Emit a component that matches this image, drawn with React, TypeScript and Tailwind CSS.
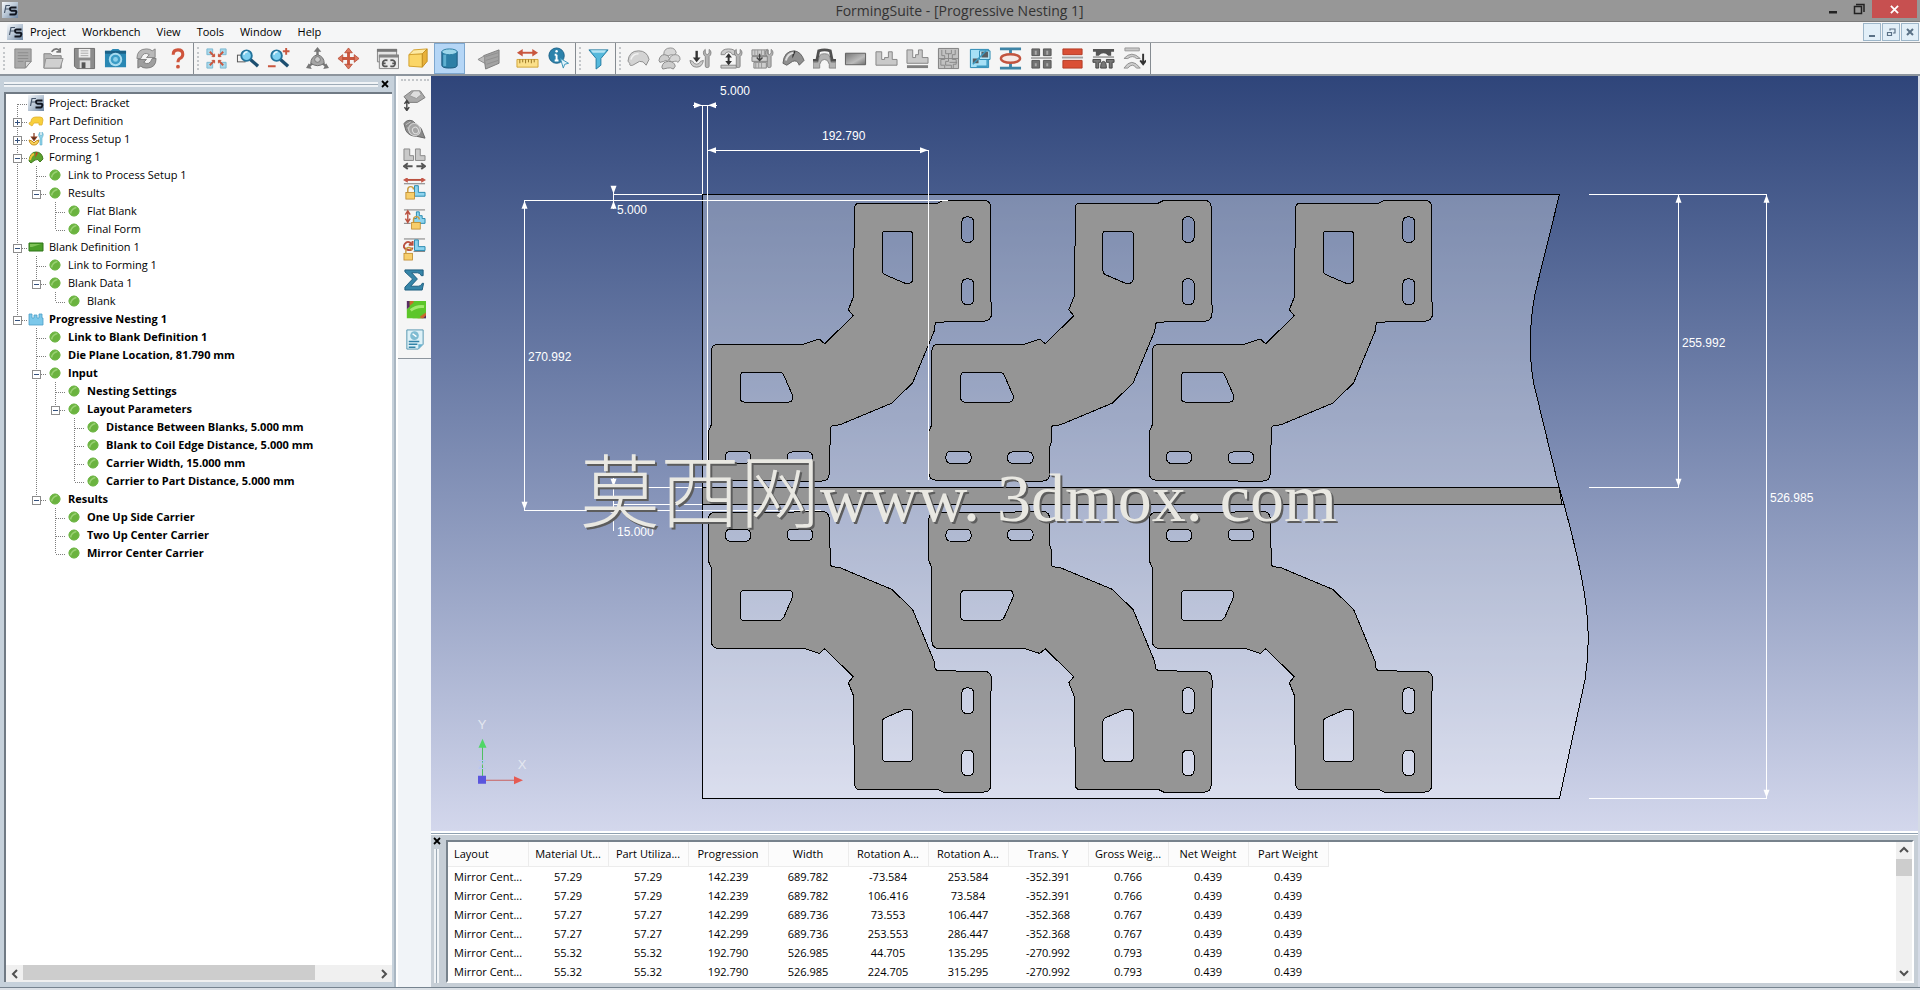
import { Fragment, ReactNode } from "react";

type IconProps = { children: ReactNode };

function Icon({ children }: IconProps) {
  return (
    <svg viewBox="0 0 24 24" className="size-[23px] shrink-0" fill="none" aria-hidden="true">
      {children}
    </svg>
  );
}

const FsLogo = () => (
  <svg viewBox="0 0 16 16" className="size-4 shrink-0" aria-hidden="true">
    <defs>
      <linearGradient id="fs" x1="0" y1="0" x2="1" y2="1">
        <stop offset="0" stopColor="#f4f7fa" />
        <stop offset="0.5" stopColor="#b9c7d6" />
        <stop offset="1" stopColor="#6f87a3" />
      </linearGradient>
    </defs>
    <rect width="16" height="16" fill="url(#fs)" />
    <path d="M2.500 11L4 3.500h4M3.500 7h3.500" fill="none" stroke="#46566b" strokeWidth="1.200" />
    <path d="M14.500 5.500H9.500Q8 5.500 8 7t1.500 1.700H13q1.500 0 1.300 1.800T12.500 12.500H7.500" fill="none" stroke="#10151f" strokeWidth="2" />
  </svg>
);

const wrench = (
  <path d="M17 2.500v4l2 1.500 2-1.500v-4q2 1 2 3.500t-2 4v10q0 1.500-2 1.500t-2-1.500V10q-2-1.500-2-4t2-3.500z" fill="#b4b4b4" stroke="#777" strokeWidth="0.800" />
);
const ell = (x: number, y: number) => (
  <path d={`M${x} ${y}h4v7h7v4h-11z`} fill="#8ed4ef" stroke="#2789b0" />
);
const lock = (x: number, y: number) => (
  <>
    <path d={`M${x + 2} ${y}v-3q0-3 3-3t3 3`} stroke="#c99a3c" strokeWidth="1.500" />
    <rect x={x} y={y} width="9" height="7" fill="#f7ce6b" stroke="#bb8526" strokeWidth="0.800" />
  </>
);

const fileTools: [string, ReactNode][] = [
  ["New", <><path d="M4 2h17v13l-6 7H4z" fill="#a9a9a9" stroke="#8a8a8a" /><path d="M15 22v-7h6z" fill="#d8d8d8" stroke="#8a8a8a" /><path d="M7 6h11M7 9h11M7 12h11M7 15h6" stroke="#8c8c8c" /></>],
  ["Open", <><path d="M2 7h7l2 2h9v13H2z" fill="#b5b5b5" stroke="#858585" /><path d="M4 12h18l-3 10H2z" fill="#d0d0d0" stroke="#909090" /><path d="M10 5q5-6 9 0m0-4v4h-4" stroke="#777" strokeWidth="1.800" /></>],
  ["Save", <><path d="M1.500 1.500h21v21H4l-2.500-2.500z" fill="#8c8c8c" stroke="#6d6d6d" /><path d="M6 2h12v9H6z" fill="#eee" /><path d="M8 4h8M8 6.500h8M8 9h8" stroke="#aaa" /><path d="M7 14h11v8H7z" fill="#ddd" /><path d="M9 16h4v6H9z" fill="#555" /></>],
  ["Snapshot", <><path d="M1 4h6l2-2h6l2 2h6v17H1z" fill="#2a88b4" /><path d="M1 4h22v3H1z" fill="#1b6187" /><circle cx="12" cy="13" r="7" fill="#a7dcf0" /><circle cx="12" cy="13" r="5" fill="#3b9cc6" /><circle cx="12" cy="13" r="2.500" fill="#8bd0ea" /></>],
  ["Refresh", <><path d="M2 12Q2 2 12 2q4 0 6 2l3-2v9h-9l3-3q-6-4-9 4z" fill="#b9b9b9" stroke="#858585" /><path d="M22 12q0 10-10 10-4 0-6-2l-3 2v-9h9l-3 3q6 4 9-4z" fill="#9f9f9f" stroke="#7c7c7c" /></>],
  ["Help", <><path d="M7.500 8q0-5 5-5t5 4.500q0 3-3 4.500-2 1-2 4" stroke="#cf553c" strokeWidth="3.200" /><circle cx="12.500" cy="20.500" r="2" fill="#cf553c" /></>],
];

const lens = (x: number) => (
  <>
    <path d={`M${x + 4} 13l8 7`} stroke="#1d4f70" strokeWidth="3.500" />
    <circle cx={x} cy="9" r="5.500" fill="#7fd0f0" stroke="#23749c" strokeWidth="2" />
    <path d={`M${x - 3} 8q1-3 4-3`} stroke="#e8f8ff" strokeWidth="1.500" />
  </>
);

const viewTools: [string, ReactNode][] = [
  ["Fit view", <><path d="M2 2h6v6H2zM16 2h6v6h-6zM2 16h6v6H2zM16 16h6v6h-6z" fill="#a9d8ea" stroke="#7ab8d2" /><path d="M5 5l5 5M19 5l-5 5M5 19l5-5M19 19l-5-5" stroke="#c9573f" strokeWidth="2" /><path d="M10 7v3H7M14 7v3h3M10 17v-3H7M14 17v-3h3" stroke="#c9573f" /></>],
  ["Zoom window", <><rect x="1.500" y="8.500" width="8" height="7" stroke="#555" />{lens(11)}</>],
  ["Zoom in or out", <>{lens(10)}<path d="M20 1v7M16.500 4.500h7M1 20h8" stroke="#c9573f" strokeWidth="2" /></>],
];
const moveTools: [string, ReactNode][] = [
  ["Rotate view", <><path d="M12 3v10M12 13l-9 7M12 13l9 7" stroke="#777" strokeWidth="2.500" /><path d="M12 0l-4 5h8zM0 22l6 1-3-6zM24 22l-6 1 3-6z" fill="#777" /><path d="M5 17q0-7 7-9 7 2 7 9-7 5-14 0z" fill="#a5a5a5" stroke="#6c6c6c" /><circle cx="12" cy="13" r="3" fill="#ccc" stroke="#777" /></>],
  ["Pan", <><path d="M12 4v16M4 12h16" stroke="#c9573f" strokeWidth="3" /><path d="M12 1l-4 5h8zM12 23l-4-5h8zM1 12l5-4v8zM23 12l-5-4v8z" fill="#dd765d" stroke="#b3452e" strokeWidth="0.800" /></>],
];
const displayTools: [string, ReactNode][] = [
  ["Reset window", <><path d="M1.500 2.500h20v13h-20z" fill="#e4e4e4" stroke="#858585" /><path d="M1 2h21v3H1z" fill="#777" /><path d="M3.500 8.500h20v14h-20z" fill="#e9e9e9" stroke="#858585" /><path d="M3 8h21v3H3z" fill="#858585" /><path d="M12 14q-5-1-5 3h3m5-3q5-1 5 3m-5 3q5 1 5-3h-3m-5 3q-5 1-5-2" stroke="#555" strokeWidth="1.800" /></>],
  ["Perspective", <><path d="M2 8l14-1v14L2 20z" fill="#fbd667" stroke="#d3a02c" /><path d="M2 8l5-5 14-1-5 5z" fill="#fdeaa4" stroke="#d3a02c" /><path d="M16 7l5-5v13l-5 6z" fill="#e8b13a" stroke="#c28f22" /></>],
];
const shade: [string, ReactNode] = [
  "Shaded view",
  <><path d="M4 5v14q0 3 8 3t8-3V5z" fill="#2d7fa6" stroke="#1c5a7d" /><ellipse cx="12" cy="5" rx="8" ry="3" fill="#9dd6ea" stroke="#2c7ea4" /><path d="M7 8v12" stroke="#5fb0d0" strokeWidth="3" /></>,
];
const mirror: [string, ReactNode] = ["Section view", <><path d="M7 9L23 3v14L9 23z" fill="#a3a3a3" stroke="#7c7c7c" /><path d="M1 13l7-4v8z" fill="#bdbdbd" stroke="#8c8c8c" /><path d="M9 10l13-4M9 14l13-4M10 18l12-4" stroke="#8f8f8f" /></>];
const measureTools: [string, ReactNode][] = [
  ["Measure", <><path d="M5 6h14" stroke="#c9573f" strokeWidth="2" /><path d="M1 6l6-4v8zM23 6l-6-4v8z" fill="#c9573f" /><path d="M1 13h22v8H1z" fill="#fbe08a" stroke="#d1a336" /><path d="M4 13v4M7 13v3M10 13v4M13 13v3M16 13v4M19 13v3" stroke="#967221" /></>],
  ["Information", <><circle cx="10" cy="9" r="8" fill="#2c82ab" stroke="#1c6288" /><path d="M10 8v6M8 14h4M8 8h2" stroke="#fff" strokeWidth="2" /><circle cx="10" cy="4.500" r="1.300" fill="#fff" /><path d="M14 12l3 10 1.500-4 4-1z" fill="#dff3fb" stroke="#3893b8" /></>],
];
const filterTool: [string, ReactNode] = ["Filter", <><path d="M2 3h20l-7.500 9v7l-5 4V12z" fill="#55b9dc" stroke="#207ba2" /><path d="M4 3.500h16l-2 2.500H6z" fill="#b4e3f3" /></>];

const processTools: [string, ReactNode][] = [
  ["Part", <><path d="M1 15Q2 4 12 4q9 0 11 9l-3 6q-3-5-7-4l-7 4q-4 1-3-2z" fill="#d3d3d3" stroke="#8c8c8c" /><path d="M4 13q2-6 8-6" stroke="#f2f2f2" strokeWidth="1.500" /></>],
  ["Parts", <><path d="M6 8q0-7 7-7 5 0 6 5l-2 3q-3-2-6 0l-4 1z" fill="#d6d6d6" stroke="#909090" /><path d="M1 14q1-6 6-6 4 0 5 4l-2 3q-2-2-4 0l-4 1z" fill="#cecece" stroke="#8a8a8a" /><path d="M12 13q1-5 6-5t5 5l-2 3q-2-2-4-1l-4 1z" fill="#d6d6d6" stroke="#909090" /><path d="M4 21q1-6 7-6 6 0 7 5l-2 3q-3-2-6-1l-5 1z" fill="#ccc" stroke="#888" /></>],
  ["Process setup", <><path d="M8 4v9" stroke="#333" strokeWidth="2.500" /><path d="M4 11h8l-4 5z" fill="#333" /><path d="M1 14q1 7 7 7t7-7l-3 1q-1 3-4 3t-4-3z" fill="#ccc" stroke="#888" />{wrench}</>],
  ["Die setup", <><path d="M1 8q0-6 8-6t8 6h-4q-1-3-4-3T5 8zM1 19h16v3H1z" fill="#ccc" stroke="#888" /><path d="M9 8v9" stroke="#333" strokeWidth="2" /><path d="M5.500 11L9 6.500l3.500 4.500zM5.500 14.500L9 19l3.500-4.500z" fill="#333" />{wrench}</>],
  ["Press setup", <><path d="M1 3h17v6H1zM1 10h17v5H1zM3 16h13v6H3z" fill="#cdcdcd" stroke="#858585" /><path d="M4 3v6M7 3v6M11 3v6M14 3v6M5 16v6M8 16v6M11 16v6" stroke="#999" /><path d="M9 7v7m-3-3l3 3 3-3" stroke="#444" strokeWidth="1.500" />{wrench}</>],
  ["Forming", <><path d="M1 17Q2 4 13 4q7 1 10 10l-5 5q-2-6-7-4l-6 4z" fill="#8f8f8f" stroke="#636363" /><path d="M13 4q-3 4-2 8l3-7z" fill="#333" /><path d="M4 14q2-7 8-8" stroke="#ddd" strokeWidth="2" /></>],
  ["Springback", <><path d="M0 16h5l2-7q1-2 5-2t5 2l2 7h5v6h-7v-4l-2-4q-3-2-6 0l-2 4v4H0z" fill="#b2b2b2" stroke="#868686" /><path d="M0 14h4L6 4q6-2 12 0l2 10h4" stroke="#505050" strokeWidth="3" /></>],
  ["Blank", <><defs><linearGradient id="bk" x1="0" y1="0" x2="1" y2="1"><stop stopColor="#777" /><stop offset="0.600" stopColor="#bbb" /><stop offset="1" stopColor="#707070" /></linearGradient></defs><path d="M1.500 6.500h21v12h-21z" fill="url(#bk)" stroke="#5d5d5d" /></>],
  ["Nesting", <path d="M1 5h6v8h3v-2h4V5h4v8h5v6H1z" fill="#c9c9c9" stroke="#858585" />],
  ["Progressive nesting", <><path d="M1 3h6v8h3V8h3V3h4v8h6v6H1z" fill="#c9c9c9" stroke="#858585" /><path d="M1 19h22v3H1z" fill="#808080" /></>],
  ["Grid nesting", <><path d="M1.500 1.500h21v21h-21z" fill="#c1c1c1" stroke="#808080" /><path d="M5 3v6h3v4H4v6h4v3M9 3v4h6V3M12 7v8H9v4h6v3M19 3v5h-3v5h4v5h-3v4M2 12h20M13 16h8" stroke="#888" /></>],
  ["Compare", <><path d="M2.500 2.500h19v19h-19z" fill="#a6e0f6" stroke="#2787b2" /><path d="M12 4h11v9H12z" fill="#bceafa" stroke="#2787b2" /><path d="M14 5h7v6h-7zM5 12h6v5H5z" fill="#575f64" /><path d="M5 18L19 4M9 20h11v-7" stroke="#3b9ac1" strokeWidth="1.500" /></>],
  ["Stage", <><path d="M1 2h22M1 22h22M12 2v5M12 17v5" stroke="#3e84a6" strokeWidth="3" /><ellipse cx="12" cy="12" rx="10" ry="4.500" fill="#f6e9e6" stroke="#c2543f" strokeWidth="2.500" /></>],
  ["Four up", <><path d="M2 2h8v7H2zM14 2h8v7h-8zM2 14h8v8H2zM14 14h8v8h-8z" fill="#727272" stroke="#555" /><path d="M6 4v4M18 4v4M6 17v3M18 17v3" stroke="#a9a9a9" strokeWidth="2" /><path d="M1 11.500h22" stroke="#aaa" strokeWidth="2" /></>],
  ["Two up", <><path d="M2 2h20v6H2zM2 14h20v8H2z" fill="#da4f35" stroke="#b43b25" /><path d="M1 11h22" stroke="#a2a2a2" strokeWidth="2" /></>],
  ["Die construction", <><path d="M1 2h22v3h-3v4H17q-5-5-10 0H4V5H1z" fill="#555" /><path d="M1 10.500h22" stroke="#aaa" strokeWidth="2" /><path d="M1 13h8v3H7v6H4v-6H1zM15 13h8v3h-2v6h-3v-6h-3zM9 22q0-7 3-7t3 7z" fill="#777" stroke="#444" /></>],
  ["Stamping", <><path d="M2 1h15v3H2z" fill="#c9c9c9" stroke="#999" /><path d="M1 12q8-9 17 0h-4q-4-4-9 0zM1 22q8-12 17 0h-4q-4-6-9 0z" fill="#ccc" stroke="#919191" /><path d="M21 7v10m-3-3l3 4 3-4" stroke="#333" strokeWidth="2" /></>],
];

const sideTools: [string, ReactNode][] = [
  ["Blank height", <><path d="M1 9l8-6h9l5 7-8 5H6z" fill="#aaa" stroke="#7c7c7c" /><path d="M7 8l4-5h6l2 4-5 4z" fill="#ddd" stroke="#999" /><path d="M4 14v8M1.500 16.500L4 13l2.500 3.500M1.500 20L4 23.500 6.500 20" stroke="#444" strokeWidth="1.500" /></>],
  ["Coil", <><path d="M1 6q3-5 9-3l9 8 4 10-9-2q-8 0-11-6z" fill="#8b8b8b" stroke="#676767" /><ellipse cx="12" cy="12" rx="6" ry="6.500" fill="#a6a6a6" stroke="#ddd" transform="rotate(-30 12 12)" /><ellipse cx="13" cy="13" rx="3" ry="3.500" stroke="#ddd" transform="rotate(-30 13 13)" /><path d="M3 7l5-3M4 11l7-6" stroke="#c4c4c4" /></>],
  ["Spacing", <><path d="M1 1h6v7h4v5H1zM13 1h5v7h5v5H13z" fill="#c9c9c9" stroke="#888" /><path d="M3 19h7M14 19h7M5 16l-4 3 4 3M19 16l4 3-4 3" stroke="#555" strokeWidth="2" /></>],
  ["Lock width", <><path d="M3 2h18" stroke="#b9503f" strokeWidth="2" /><path d="M5-1L0 2l5 3zM19-1l5 3-5 3z" fill="#c4584a" /><path d="M1 6h22" stroke="#777" />{ell(12, 8)}{lock(3, 15)}</>],
  ["Lock height", <><path d="M1 2h22M1 16h7" stroke="#777" /><path d="M5 4v10M2.500 7L5 3l2.500 4M2.500 11L5 15l2.500-4" stroke="#b9503f" strokeWidth="1.500" /><path d="M14 4h3v4h3v3h3v5h-12v-5h3z" fill="#8ed4ef" stroke="#2789b0" />{lock(9, 15)}</>],
  ["Lock rotation", <><path d="M1 1h22M11 14h12" stroke="#777" /><path d="M9 6q-4-4-7 0t2 6 6-2M10 3v4H6" stroke="#b9503f" strokeWidth="2" />{ell(12, 2)}{lock(1, 16)}</>],
  ["Summary", <path d="M2 2h19v6h-2q-1-3-4-3H9l6 6.500L8 19h8q3 0 4-3h1.500L20 23H2v-3l8-8.500L2 4z" fill="#3685a8" stroke="#1c5d7e" />],
  ["Contour", <><path d="M4 3h20v18H10z" fill="#5cc62a" /><path d="M4 3h3v6l-3 3zM19 21h5v-4z" fill="#5a2d63" /><path d="M7 3v5l4-3V3zM15 21l9-6v3l-3 3z" fill="#c96a2d" /><path d="M4 12v9h15L8 8z" fill="#5cc62a" /><path d="M8 13q6-5 14-4" stroke="#a1e86f" strokeWidth="3" /></>],
  ["Report", <><path d="M4 2h17v15l-5 5H4z" fill="#def1f7" stroke="#5595b0" /><circle cx="12" cy="8" r="4.500" fill="#7fbcd2" /><path d="M10 6l4 3" stroke="#fff" strokeWidth="1.500" /><path d="M6 14h11M6 17h9M6 20h7" stroke="#3283a7" strokeWidth="1.500" /><path d="M16 22v-5h5z" fill="#69b2cf" /></>],
];

function ToolButton({ tool, active }: { tool: [string, ReactNode]; active?: boolean }) {
  return (
    <button
      aria-label={tool[0]}
      className={`flex h-[31px] w-[31px] shrink-0 items-center justify-center ${
        active ? "border border-[#7da7cf] bg-[#b5d6f6]" : ""
      }`}
    >
      <Icon>{tool[1]}</Icon>
    </button>
  );
}

const Buttons = ({ tools }: { tools: [string, ReactNode][] }) => (
  <div className="flex">
    {tools.map((t) => (
      <ToolButton key={t[0]} tool={t} />
    ))}
  </div>
);

const Grip = () => (
  <div className="flex w-[7px] shrink-0 justify-center py-1">
    <div className="border-l-2 border-dotted border-[#c4c7ca]" />
  </div>
);

const Divider = () => <div className="w-px shrink-0 bg-[#858b91]" />;

type Node = { text: string; icon?: string; bold?: boolean; children?: Node[]; closed?: boolean };

const tree: Node[] = [
  { text: "Project: Bracket", icon: "fs" },
  { text: "Part Definition", icon: "part", closed: true },
  { text: "Process Setup 1", icon: "setup", closed: true },
  {
    text: "Forming 1",
    icon: "forming",
    children: [
      { text: "Link to Process Setup 1" },
      { text: "Results", children: [{ text: "Flat Blank" }, { text: "Final Form" }] },
    ],
  },
  {
    text: "Blank Definition 1",
    icon: "blank",
    children: [
      { text: "Link to Forming 1" },
      { text: "Blank Data 1", children: [{ text: "Blank" }] },
    ],
  },
  {
    text: "Progressive Nesting 1",
    icon: "nesting",
    bold: true,
    children: [
      { text: "Link to Blank Definition 1" },
      { text: "Die Plane Location, 81.790 mm" },
      {
        text: "Input",
        children: [
          { text: "Nesting Settings" },
          {
            text: "Layout Parameters",
            children: [
              { text: "Distance Between Blanks, 5.000 mm" },
              { text: "Blank to Coil Edge Distance, 5.000 mm" },
              { text: "Carrier Width, 15.000 mm" },
              { text: "Carrier to Part Distance, 5.000 mm" },
            ],
          },
        ],
      },
      {
        text: "Results",
        children: [
          { text: "One Up Side Carrier" },
          { text: "Two Up Center Carrier" },
          { text: "Mirror Center Carrier" },
        ],
      },
    ],
  },
];

function NodeIcon({ name }: { name?: string }) {
  if (name === "fs") return <FsLogo />;
  return (
    <svg viewBox="0 0 16 16" className="size-4 shrink-0" fill="none" aria-hidden="true">
      {!name && (
        <>
          <circle cx="8" cy="8" r="5.300" fill="#6bb33f" />
          <path d="M4.500 10.500q1-5 6-6" stroke="#98d072" strokeWidth="1.600" />
          <circle cx="8" cy="8" r="5" stroke="#74b94d" />
        </>
      )}
      {name === "part" && <path d="M1 11q0-2 2-2 0-5 5-5h4q3 0 3 3l-1 5h-3v-2H6l-2 3z" fill="#f8cf3c" stroke="#dfb02c" strokeWidth="0.800" />}
      {name === "setup" && (
        <>
          <path d="M1 9q1 5 5 5t5-5l-3 1-2 2-2-2z" fill="#fbd45c" stroke="#c78f1e" />
          <path d="M6 2v5M3.500 6L6 9.500 8.500 6z" fill="#333" stroke="#8a3a1c" strokeWidth="1.200" />
          <path d="M12 1v3l1 1 1-1V1q2 2 1 4l-1 2v7h-2V7q-3-3 0-6z" fill="#8fd3ea" stroke="#63aecb" strokeWidth="0.600" />
        </>
      )}
      {name === "forming" && (
        <>
          <path d="M1 12Q2 3 8 3q6 0 7 7l-3 3q-2-4-5-2l-4 3z" fill="#5ca32e" stroke="#41791f" />
          <path d="M8 3l-1 6 3-5z" fill="#c83d20" />
          <path d="M2 11q1-5 4-6" stroke="#f0c23a" strokeWidth="2" />
        </>
      )}
      {name === "blank" && (
        <>
          <path d="M1 4h14v8H1z" fill="#4b9e2a" stroke="#2f7418" />
          <path d="M2 5h11l-9 3H2z" fill="#7fc258" />
        </>
      )}
      {name === "nesting" && <path d="M1 3h3v4h2V4h3v3h2V3h3v4h1v7H1z" fill="#7cc8ea" stroke="#4ba0c8" strokeWidth="0.800" />}
    </svg>
  );
}

// One 19px cell of the guide lines left of a tree label.
function Guide({ kind, first }: { kind: string; first?: boolean }) {
  const box = kind.includes("box");
  return (
    <svg viewBox="0 0 19 18" className="h-[18px] w-[19px] shrink-0" fill="none" shapeRendering="crispEdges" aria-hidden="true">
      <g stroke="#7d7d7d" strokeDasharray="1 1">
        {!first && kind !== "none" && <path d="M9.500 0V10" />}
        {(kind === "line" || kind.includes("more")) && <path d="M9.500 10V18" />}
        {kind !== "line" && kind !== "none" && <path d="M10 10.500H19" />}
      </g>
      {box && (
        <>
          <rect x="5.500" y="6.500" width="8" height="8" fill="#fff" stroke="#8c8c8c" />
          <path d="M7 10.500h5" stroke="#33507c" />
          {kind.includes("plus") && <path d="M9.500 8v5" stroke="#33507c" />}
        </>
      )}
    </svg>
  );
}

function TreeRows({ nodes, lines = [], bold }: { nodes: Node[]; lines?: boolean[]; bold?: boolean }) {
  return (
    <ul>
      {nodes.map((n, i) => {
        const last = i === nodes.length - 1;
        const strong = bold || n.bold;
        const kind = [
          n.children || n.closed ? "box" : "leaf",
          n.closed ? "plus" : "",
          last ? "" : "more",
        ].join("-");
        return (
          <li key={n.text}>
            <div className="flex h-[18px] items-center">
              {lines.map((on, d) => (
                <Guide key={d} kind={on ? "line" : "none"} />
              ))}
              <Guide kind={kind} first={i === 0 && lines.length === 0} />
              <div className="flex w-[18px] shrink-0 justify-center">
                <NodeIcon name={n.icon} />
              </div>
              <span className={`pl-1 leading-[18px] whitespace-nowrap ${strong ? "font-bold" : ""}`}>
                {n.text}
              </span>
            </div>
            {n.children && <TreeRows nodes={n.children} lines={[...lines, !last]} bold={strong} />}
          </li>
        );
      })}
    </ul>
  );
}

const columns = [
  "Layout",
  "Material Ut...",
  "Part Utiliza...",
  "Progression",
  "Width",
  "Rotation A...",
  "Rotation A...",
  "Trans. Y",
  "Gross Weig...",
  "Net Weight",
  "Part Weight",
];

const rows = [
  ["57.29", "57.29", "142.239", "689.782", "-73.584", "253.584", "-352.391", "0.766", "0.439", "0.439"],
  ["57.29", "57.29", "142.239", "689.782", "106.416", "73.584", "-352.391", "0.766", "0.439", "0.439"],
  ["57.27", "57.27", "142.299", "689.736", "73.553", "106.447", "-352.368", "0.767", "0.439", "0.439"],
  ["57.27", "57.27", "142.299", "689.736", "253.553", "286.447", "-352.368", "0.767", "0.439", "0.439"],
  ["55.32", "55.32", "192.790", "526.985", "44.705", "135.295", "-270.992", "0.793", "0.439", "0.439"],
  ["55.32", "55.32", "192.790", "526.985", "224.705", "315.295", "-270.992", "0.793", "0.439", "0.439"],
];

const bracket =
  "M859 203.300H938L943 200.700H984Q990.700 200.700 990.700 208V300L991.500 305V313Q991.500 321.300 984 321.500H962L938 322.500Q935 322.500 935 325L934.300 331L912.700 383L892 403.300L840 425L833 426Q830.700 426 830.700 429V443L829.300 447V473Q829.300 481.300 822 481.300H797L793 480.500H716Q708.300 480.500 708.300 473V432L711.300 425V352Q711.300 344.300 719 344.300H804L819.300 339.300L824.700 344L853.300 316L848.300 310L853.500 297V250L854.500 246V210Q854.500 203.300 859 203.300Z" +
  "M886 231.300H909Q912.700 231.300 912.700 235V280Q912 284.500 905 283.500L885 275Q882.300 273.500 882.300 271V235Q882.300 231.300 886 231.300Z" +
  "M961.700 223Q961.700 217 967.700 217T973.700 223V237Q973.700 242.700 967.700 242.700T961.700 237Z" +
  "M961.700 285Q961.700 279 967.700 279T973.700 285V299Q973.700 305 967.700 305T961.700 299Z" +
  "M744 372.300H779Q782 372.300 784 376L792.700 396Q793 402.300 789 402.300H744Q740.300 402.300 740.300 398V377Q740.300 372.300 744 372.300Z" +
  "M731 451.500H745Q750.700 451.500 750.700 457.500T745 463.700H731Q725.300 463.700 725.300 457.500T731 451.500Z" +
  "M793 452H807Q812.700 452 812.700 458T807 463.700H793Q787 463.700 787 458T793 452Z";

const tips: [number, number, string][] = [
  [702, 105.5, "r"],
  [708, 105.5, "l"],
  [708, 150.5, "l"],
  [928, 150.5, "r"],
  [613.5, 194, "d"],
  [613.5, 201, "u"],
  [524.5, 201, "u"],
  [524.5, 510, "d"],
  [613.5, 487, "d"],
  [613.5, 505, "u"],
  [1678.5, 195, "u"],
  [1678.5, 487, "d"],
  [1766.5, 195, "u"],
  [1766.5, 798, "d"],
];
const spin: Record<string, number> = { r: 0, d: 90, l: 180, u: 270 };

const labels: [number, number, string][] = [
  [720, 95, "5.000"],
  [822, 140, "192.790"],
  [617, 214, "5.000"],
  [528, 361, "270.992"],
  [617, 536, "15.000"],
  [1682, 347, "255.992"],
  [1770, 502, "526.985"],
];

function Viewport() {
  return (
    <svg
      viewBox="431 76 1487 755"
      preserveAspectRatio="xMidYMid slice"
      className="absolute inset-0 h-full w-full"
      fill="none"
      role="img"
      aria-label="Nesting layout"
    >
      <g shapeRendering="crispEdges">
        <path
          d="M702.500 194.500H1559.500L1535 294Q1526 343 1534 385L1557 480C1563 500 1581 565 1586 605Q1591 643 1585 680C1580 705 1570 750 1559.500 798.500H702.500Z"
          fill="#fff"
          fillOpacity="0.3"
          stroke="#000"
        />
        <path d="M702.500 487.500H1559L1562 504.500H702.500Z" fill="#959595" stroke="#000" />
        {[0, 220.5, 441].map((dx) => (
          <Fragment key={dx}>
            <path d={bracket} transform={`translate(${dx} 0)`} fill="#959595" fillRule="evenodd" stroke="#000" />
            <path d={bracket} transform={`translate(${dx} 993) scale(1 -1)`} fill="#959595" fillRule="evenodd" stroke="#000" />
          </Fragment>
        ))}
        <g stroke="#fff">
          <path d="M693 105.500H717M702.500 105V194M707.500 105V480M707.500 150.500H928.500M928.500 150V480" />
          <path d="M613 194.500H702M524 200.500H948M613.500 186V209M524.500 200V510.500H821" />
          <path d="M613.500 478V531M613 487.500H702M613 504.500H702" />
          <path d="M1589 194.500H1767M1589 487.500H1679M1589 798.500H1767M1678.500 194V487M1766.500 194V798" />
        </g>
      </g>
      {tips.map(([x, y, dir]) => (
        <path key={`${x}-${y}`} d="M0 0L-8-3V3Z" transform={`translate(${x} ${y}) rotate(${spin[dir]})`} fill="#fff" />
      ))}
      <g fill="#fff" className="font-['Liberation_Sans',sans-serif] text-[12px]">
        {labels.map(([x, y, t]) => (
          <text key={`${x}-${y}`} x={x} y={y}>
            {t}
          </text>
        ))}
      </g>
      <g className="font-['Liberation_Sans',sans-serif] text-[13px]" textAnchor="middle" fill="#e3e7f0">
        <path d="M482.500 780V746" stroke="#4fbf62" />
        <path d="M482.500 739l-4 9h8z" fill="#4fd766" />
        <path d="M482.500 780.500H515" stroke="#c9605f" />
        <path d="M523 780.500l-9-4v8z" fill="#e65a52" />
        <rect x="478" y="776" width="8" height="8" fill="#5a55dd" />
        <text x="482" y="729">Y</text>
        <text x="482" y="769" fill="#b9c6ef">Z</text>
        <text x="522" y="769">X</text>
      </g>
      <text
        x="580"
        y="521"
        fill="#e9e8e2"
        className="font-['Liberation_Serif','Noto_Sans_CJK_SC',serif] text-[68px] drop-shadow-[2px_2px_0_#5d5d5d]"
      >
        <tspan className="text-[80px] font-light">莫西网</tspan>
        www. 3dmox. com
      </text>
    </svg>
  );
}

const Chevron = ({ d }: { d: string }) => (
  <svg viewBox="0 0 10 10" className="size-[10px]" fill="none" stroke="#505050" strokeWidth="2" aria-hidden="true">
    <path d={d} />
  </svg>
);

const CloseX = () => (
  <svg viewBox="0 0 8 8" className="size-2" stroke="#000" strokeWidth="1.800" aria-hidden="true">
    <path d="M1 1l6 6M7 1L1 7" />
  </svg>
);

export default function App() {
  return (
    <div className="flex h-screen flex-col overflow-hidden bg-[#f4f5f6] font-['Open_Sans','Noto_Sans',sans-serif] text-[11px] text-black">
      <header className="flex h-[22px] shrink-0 items-start border-b border-[#7c7c7c] bg-[#979797]">
        <div className="flex flex-1 items-center pt-[2px] pl-[2px]">
          <FsLogo />
        </div>
        <h1 className="text-[14px] leading-[22px] text-[#333]">FormingSuite - [Progressive Nesting 1]</h1>
        <div className="flex flex-1 justify-end pr-[3px]">
          <button aria-label="Minimize" className="flex h-[18px] w-[26px] items-center justify-center">
            <svg viewBox="0 0 12 12" className="size-3"><path d="M2 8h8v2.500H2z" fill="#222" /></svg>
          </button>
          <button aria-label="Restore" className="flex h-[18px] w-[26px] items-center justify-center">
            <svg viewBox="0 0 12 12" className="size-3" fill="none" stroke="#222" strokeWidth="1.500"><path d="M1.500 3.500h7v7h-7zM3 1.500h8V9" /></svg>
          </button>
          <button aria-label="Close" className="flex h-[18px] w-[45px] items-center justify-center bg-[#c75050]">
            <svg viewBox="0 0 10 10" className="size-[9px]" stroke="#fff" strokeWidth="2"><path d="M1 1l8 8M9 1L1 9" /></svg>
          </button>
        </div>
      </header>

      <nav className="flex h-[21px] shrink-0 items-center border-b border-[#9b9fa3] bg-[#f5f6f7] pl-[7px]">
        <FsLogo />
        <div className="flex flex-1 gap-4 pl-[7px] leading-[20px]">
          {["Project", "Workbench", "View", "Tools", "Window", "Help"].map((m) => (
            <button key={m}>{m}</button>
          ))}
        </div>
        <div className="flex gap-px pr-px">
          {["M2 9h6", "M1.5 5.500h4v3h-4zM4 3.500V2h5v4H7", "M2 2l6 6M8 2L2 8"].map((d, i) => (
            <button
              key={d}
              aria-label={["Minimize child", "Restore child", "Close child"][i]}
              className="flex h-[18px] w-[18px] items-center justify-center border border-[#9db6c9] bg-[#e2eff8]"
            >
              <svg viewBox="0 0 10 10" className="size-[10px]" fill="none" stroke="#5a7186" strokeWidth={i === 1 ? 1.2 : 2}>
                <path d={d} />
              </svg>
            </button>
          ))}
        </div>
      </nav>

      <div role="toolbar" aria-label="Main" className="flex h-[33px] shrink-0 border-b-2 border-[#8d959d] bg-[#f5f5f5]">
        <Grip />
        <Buttons tools={fileTools} />
        <Divider />
        <Grip />
        <div className="flex gap-2 pr-px">
          <Buttons tools={viewTools} />
          <Buttons tools={moveTools} />
          <div className="flex">
            <Buttons tools={displayTools} />
            <ToolButton tool={shade} active />
          </div>
          <Buttons tools={[mirror]} />
          <Buttons tools={measureTools} />
        </div>
        <Divider />
        <Grip />
        <div className="pr-px">
          <ToolButton tool={filterTool} />
        </div>
        <Divider />
        <Grip />
        <Buttons tools={processTools} />
        <Divider />
      </div>

      <div className="flex min-h-0 flex-1">
        <aside className="flex w-[396px] shrink-0 flex-col border-r-2 border-[#a9b6c2] bg-[#c6d1db] pr-[2px] pb-[5px] pl-1">
          <div className="flex h-4 shrink-0 items-center">
            <div className="h-[5px] flex-1 border-y-2 border-[#f0f3f6] bg-[#9eabb7]" />
            <button aria-label="Close project tree" className="flex w-[14px] justify-center">
              <CloseX />
            </button>
          </div>
          <div className="flex min-h-0 flex-1 flex-col border-t-2 border-l-2 border-[#707a84] bg-white">
            <div className="min-h-0 flex-1 overflow-hidden pl-[2px]">
              <TreeRows nodes={tree} />
            </div>
            <div className="flex h-[17px] shrink-0 bg-[#f0f0f0]">
              <button aria-label="Scroll left" className="flex w-[17px] items-center justify-center">
                <Chevron d="M7 1L3 5l4 4" />
              </button>
              <div className="flex-1">
                <div className="h-[15px] w-[83%] bg-[#cdcdcd]" />
              </div>
              <button aria-label="Scroll right" className="flex w-[17px] items-center justify-center">
                <Chevron d="M3 1l4 4-4 4" />
              </button>
            </div>
          </div>
        </aside>

        <div className="flex w-[35px] shrink-0 flex-col border-l-2 border-white bg-[#f1f4f8]">
          <div role="toolbar" aria-label="Nesting" className="flex flex-col items-center border-b border-[#8d959d] bg-[#f5f5f5] pb-1">
            <div className="my-[3px] w-[28px] border-t-2 border-dotted border-[#c4c7ca]" />
            {sideTools.map((t) => (
              <button key={t[0]} aria-label={t[0]} className="flex h-[30px] w-[31px] items-center justify-center">
                <Icon>{t[1]}</Icon>
              </button>
            ))}
          </div>
        </div>

        <main className="flex min-w-0 flex-1 flex-col">
          <div className="relative min-h-0 flex-1 bg-linear-to-b from-[#2f457a] to-[#d3d7ec]">
            <Viewport />
          </div>

          <section className="flex shrink-0 flex-col border-t-2 border-white bg-[#c6ced6]">
            <div className="h-[2px] border-b border-white bg-[#8fa1b1]" />
            <div className="flex pr-1 pb-1 pl-[2px]">
              <div className="flex w-[13px] shrink-0 flex-col items-start gap-1 pt-[2px]">
                <button aria-label="Close results" className="flex">
                  <CloseX />
                </button>
                <div className="ml-px w-[5px] flex-1 border-x-2 border-[#f0f3f6] bg-[#9eabb7]" />
              </div>
              <div className="mt-[5px] flex flex-1 border-2 border-[#77828c] border-r-white border-b-white bg-white">
                <div className="flex-1">
                  <table className="table-fixed border-collapse">
                    <thead>
                      <tr className="h-[25px] bg-[#fcfcfc]">
                        {columns.map((c, i) => (
                          <th
                            key={i}
                            className={`border-r border-b border-[#ececec] p-0 font-normal whitespace-nowrap ${
                              i === 0 ? "w-[80px] pl-[6px] text-left" : "w-[80px] text-center"
                            }`}
                          >
                            {c}
                          </th>
                        ))}
                      </tr>
                    </thead>
                    <tbody>
                      {rows.map((r, i) => (
                        <tr key={i} className="h-[19px]">
                          <td className="p-0 pl-[6px] leading-[19px] whitespace-nowrap">Mirror Cent...</td>
                          {r.map((v, j) => (
                            <td key={j} className="p-0 text-center leading-[19px]">
                              {v}
                            </td>
                          ))}
                        </tr>
                      ))}
                    </tbody>
                  </table>
                </div>
                <div className="flex w-4 flex-col bg-[#f0f0f0]">
                  <button aria-label="Scroll up" className="flex h-[17px] items-center justify-center">
                    <Chevron d="M1 7l4-4 4 4" />
                  </button>
                  <div className="h-[17px] bg-[#cdcdcd]" />
                  <div className="flex-1" />
                  <button aria-label="Scroll down" className="flex h-[17px] items-center justify-center">
                    <Chevron d="M1 3l4 4 4-4" />
                  </button>
                </div>
              </div>
            </div>
          </section>
        </main>
        <div className="w-[2px] shrink-0 bg-[#d5dbe6]" />
      </div>
      <footer className="h-[3px] shrink-0 border-t border-[#76838f] bg-[#dbe0e6]" />
    </div>
  );
}
